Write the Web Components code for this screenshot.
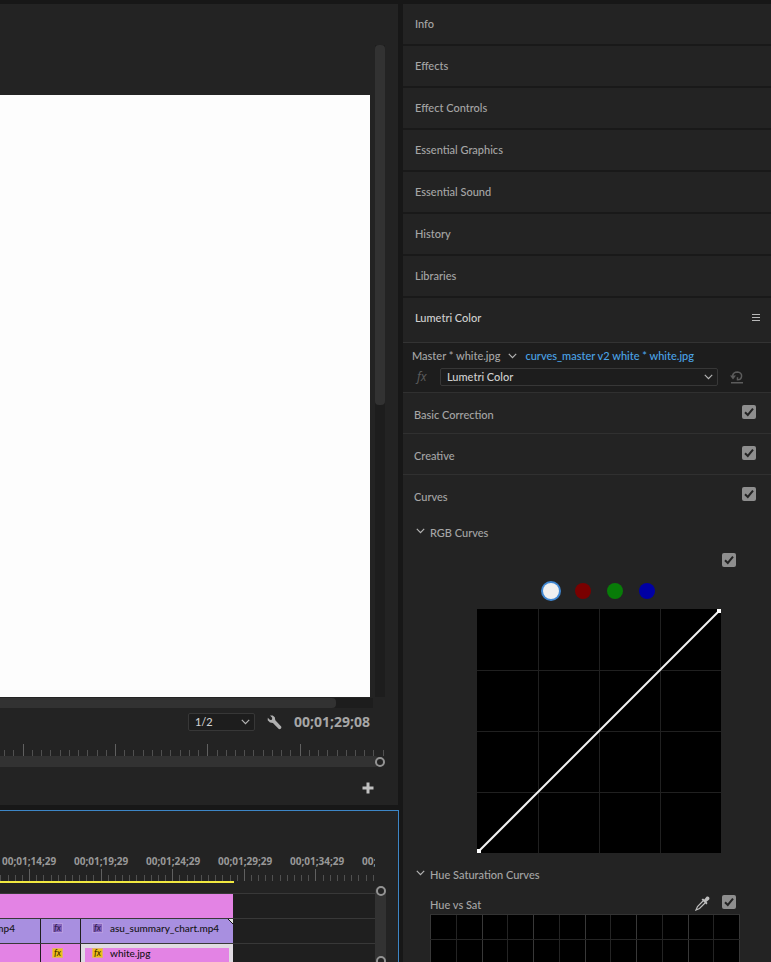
<!DOCTYPE html>
<html lang="en">
<head>
<meta charset="utf-8">
<title>Editing workspace</title>
<style>
    body {
        margin: 0;
        background: #171717;
        color: #a6a6a6;
        font: 500 11px/16px Lato, "Noto Sans", sans-serif;
    }
</style>
</head>
<body>

<edit-workspace>
    <program-monitor slot="monitor" timecode="00;01;29;08"></program-monitor>
    <time-line slot="timeline">
        <clip-track slot="tracks">
            <media-clip kind="pink" style="flex: 1"></media-clip>
        </clip-track>
        <clip-track slot="tracks">
            <media-clip kind="violet" style="width: 40px">mp4</media-clip>
            <media-clip kind="violet" fx style="width: 39px"></media-clip>
            <media-clip kind="violet" fx end style="flex: 1">asu_summary_chart.mp4</media-clip>
        </clip-track>
        <clip-track slot="tracks">
            <media-clip kind="pink" style="width: 40px"></media-clip>
            <media-clip kind="pink" fx style="width: 39px"></media-clip>
            <media-clip kind="pink" fx selected style="flex: 1">white.jpg</media-clip>
        </clip-track>
    </time-line>
    <panel-tab slot="panels">Info</panel-tab>
    <panel-tab slot="panels">Effects</panel-tab>
    <panel-tab slot="panels">Effect Controls</panel-tab>
    <panel-tab slot="panels">Essential Graphics</panel-tab>
    <panel-tab slot="panels">Essential Sound</panel-tab>
    <panel-tab slot="panels">History</panel-tab>
    <panel-tab slot="panels">Libraries</panel-tab>
    <lumetri-panel slot="panels"></lumetri-panel>
</edit-workspace>

<script>

// small helper, every element gets its shadow root from a template

function attach(element, html) {
    const template = document.createElement('template');
    template.innerHTML = html;
    element.attachShadow({mode: 'open'});
    element.shadowRoot.appendChild(template.content.cloneNode(true));
}

const chevron = `<svg class="chevron" width="9" height="6" viewBox="0 0 9 6" fill="none" stroke="#b4b4b4" stroke-width="1.2"><path d="M.8 .8 4.5 4.6 8.2 .8"/></svg>`;

// the page: monitor and timeline on the left, panels on the right

class EditWorkspace extends HTMLElement {

    constructor() {
        super();
        attach(this, `
            <style>
                :host {
                    display: grid;
                    grid-template-columns: minmax(0, 1fr) 368px;
                    gap: 4px;
                    height: 100vh;
                    overflow: hidden;
                }
                .left, .right { display: flex; flex-direction: column; min-height: 0; padding-top: 4px; }
            </style>
            <main class="left">
                <slot name="monitor"></slot>
                <slot name="timeline"></slot>
            </main>
            <aside class="right"><slot name="panels"></slot></aside>
        `);
    }
}

window.customElements.define('edit-workspace', EditWorkspace);

// tick marks, every tenth one is long

class TickRuler extends HTMLElement {

    connectedCallback() {
        const start = Number(this.getAttribute('start'));
        const step = Number(this.getAttribute('step'));
        const count = Number(this.getAttribute('count'));
        const major = Number(this.getAttribute('major'));
        let lines = '';

        for (let i = 0; i < count; i++) {
            const x = Math.floor(start + i * step);
            const long = i % 10 == major;
            lines += `<rect x="${x}" y="${long ? 0 : 6}" width="1" height="${long ? 12 : 6}" fill="${long ? '#606060' : '#505050'}"/>`;
        }

        attach(this, `
            <style>
                :host { display: block; height: 12px; overflow: hidden; }
                svg { display: block; }
            </style>
            <svg width="400" height="12">${lines}</svg>
        `);
    }
}

window.customElements.define('tick-ruler', TickRuler);

class ProgramMonitor extends HTMLElement {

    constructor() {
        super();
        attach(this, `
            <style>
                :host {
                    display: flex;
                    flex-direction: column;
                    flex: 1;
                    min-height: 0;
                    background: #232323;
                    margin-right: 1px;
                }
                .stage { display: flex; gap: 5px; flex: 1; min-height: 0; }
                .picture { flex: 1; background: #fdfdfd; margin-top: 91px; }
                .vertical { width: 10px; margin: 41px 13px 0 0; background: #1d1d1d; }
                .vertical div { height: 360px; background: #323232; border-radius: 4px; }
                .horizontal { height: 10px; margin: 1px 25px 0 0; background: #1d1d1d; }
                .horizontal div { width: 90%; height: 10px; background: #323232; border-radius: 0 4px 4px 0; }
                .controls {
                    display: flex;
                    justify-content: flex-end;
                    align-items: center;
                    height: 28px;
                    padding-right: 28px;
                    margin-bottom: 8px;
                }
                .pick { position: relative; display: flex; align-items: center; margin-right: 12px; }
                select {
                    appearance: none;
                    width: 67px;
                    height: 18px;
                    padding: 0 6px;
                    border: 1px solid #373737;
                    border-radius: 2px;
                    background: #1d1d1d;
                    color: #d0d0d0;
                    font: inherit;
                }
                .pick .chevron { position: absolute; right: 5px; pointer-events: none; }
                button { border: 0; padding: 0; background: none; }
                svg { display: block; }
                .time { margin-left: 12px; font: 700 14px/18px "Noto Sans", sans-serif; }
                .zoom { display: flex; justify-content: flex-end; align-items: center; height: 11px; margin-right: 18px; background: #323232; border-radius: 0 6px 6px 0; }
                .knob { width: 6px; height: 6px; margin-right: -5px; border: 2px solid #939393; border-radius: 50%; background: #232323; }
                .actions { display: flex; justify-content: flex-end; padding: 15px 24px 11px; }
            </style>
            <div class="stage">
                <div class="picture"></div>
                <div class="vertical"><div></div></div>
            </div>
            <div class="horizontal"><div></div></div>
            <div class="controls">
                <span class="pick">
                    <select aria-label="Playback resolution"><option>1/2</option></select>
                    ${chevron}
                </span>
                <button aria-label="Settings">
                    <svg width="15" height="15" viewBox="0 0 15 15"><path fill="#b0b0b0" d="M3 .5 5.700 .4 7.800 2.200 8.300 5.200 14.200 11.400C15 12.800 13.300 14.700 11.800 14L5.900 8 3 7.400 .7 5.200 .8 2.800 3.100 4.900 5 4.700 5.200 2.800Z"/></svg>
                </button>
                <span class="time"></span>
            </div>
            <tick-ruler start="-4.500" step="9.230" count="43" major="3"></tick-ruler>
            <div class="zoom"><div class="knob"></div></div>
            <div class="actions">
                <button aria-label="Button editor">
                    <svg width="12" height="12" viewBox="0 0 12 12"><path fill="#c0c0c0" d="M4.500 .5h3v4h4v3h-4v4h-3v-4h-4v-3h4z"/></svg>
                </button>
            </div>
        `);
        this.shadowRoot.querySelector('.time').textContent = this.getAttribute('timecode');
    }
}

window.customElements.define('program-monitor', ProgramMonitor);

class TimeLine extends HTMLElement {

    constructor() {
        super();
        attach(this, `
            <style>
                :host {
                    display: block;
                    flex: none;
                    height: 151px;
                    margin-top: 5px;
                    border: solid #3d86c6;
                    border-width: 1px 1px 0 0;
                    background: #232323;
                    overflow: hidden;
                }
                .labels {
                    display: grid;
                    grid-template-columns: repeat(6, 72px);
                    margin: 43px 23px 0 0;
                    padding-left: 2px;
                    overflow: hidden;
                    font: 700 10px/15px "Noto Sans", sans-serif;
                    color: #989898;
                }
                tick-ruler { margin-right: 23px; }
                .bar { width: 234px; height: 2px; margin-bottom: 3px; background: #f0e840; }
                .body { display: flex; }
                .tracks { flex: 1; min-width: 0; padding-top: 7px; }
                .scroll {
                    display: flex;
                    flex-direction: column;
                    justify-content: space-between;
                    align-items: center;
                    width: 11px;
                    height: 80px;
                    margin-right: 12px;
                    background: #323232;
                    border-radius: 6px;
                }
                .knob { width: 6px; height: 6px; border: 2px solid #939393; border-radius: 50%; background: #232323; }
            </style>
            <div class="labels">
                <span>00;01;14;29</span><span>00;01;19;29</span><span>00;01;24;29</span>
                <span>00;01;29;29</span><span>00;01;34;29</span><span>00;</span>
            </div>
            <tick-ruler start="0.900" step="7.160" count="53" major="4"></tick-ruler>
            <div class="bar"></div>
            <div class="body">
                <div class="tracks"><slot name="tracks"></slot></div>
                <div class="scroll"><div class="knob"></div><div class="knob"></div></div>
            </div>
        `);
    }
}

window.customElements.define('time-line', TimeLine);

class ClipTrack extends HTMLElement {

    constructor() {
        super();
        attach(this, `
            <style>
                :host { display: block; height: 24px; border-top: 1px solid #383838; background: #1f1f1f; }
                .clips { display: flex; gap: 1px; width: 233px; height: 24px; background: #1f1f1f; }
            </style>
            <div class="clips"><slot></slot></div>
        `);
    }
}

window.customElements.define('clip-track', ClipTrack);

class MediaClip extends HTMLElement {

    constructor() {
        super();
        attach(this, `
            <style>
                :host {
                    position: relative;
                    display: flex;
                    align-items: center;
                    gap: 7px;
                    box-sizing: border-box;
                    height: 24px;
                    overflow: hidden;
                    background: #e383e4;
                    color: #141414;
                    white-space: nowrap;
                    font-size: 10px;
                    line-height: 14px;
                    padding-bottom: 6px;
                }
                :host([kind="violet"]) { background: #a88fe0; }
                :host(:not([fx])) { justify-content: flex-end; padding-right: 25px; }
                :host([fx]) { padding-left: 11px; }
                :host([selected]) { border: 4px solid #e0dbe2; border-bottom: 0; padding: 0 0 10px 7px; }
                i {
                    box-sizing: border-box;
                    width: 11px;
                    height: 10px;
                    border: 1px solid #b69ce0;
                    background: #8663bb;
                    color: #302050;
                    font-size: 9px;
                    line-height: 7px;
                    text-align: center;
                }
                :host([kind="pink"]) i { background: #efbd18; border-color: #e0b070; color: #403000; }
                .corner { position: absolute; top: 0; right: 0; }
            </style>
            ${this.hasAttribute('fx') ? '<i>fx</i>' : ''}
            <slot></slot>
            ${this.hasAttribute('end') ? '<svg class="corner" width="5" height="5"><path d="M0 0h5v5z" fill="#e4e4e4"/><path d="M0 0 5 5" stroke="#111"/></svg>' : ''}
        `);
    }
}

window.customElements.define('media-clip', MediaClip);

// collapsed panel in the right column

class PanelTab extends HTMLElement {

    constructor() {
        super();
        attach(this, `
            <style>
                :host {
                    display: flex;
                    align-items: center;
                    flex: none;
                    height: 40px;
                    padding: 0 12px;
                    border-bottom: 2px solid #191919;
                    background: #232323;
                }
            </style>
            <slot></slot>
        `);
    }
}

window.customElements.define('panel-tab', PanelTab);

class CheckBox extends HTMLElement {

    constructor() {
        super();
        attach(this, `
            <style>
                :host { display: block; width: 14px; height: 14px; }
                input {
                    display: block;
                    appearance: none;
                    width: 14px;
                    height: 14px;
                    margin: 0;
                    border-radius: 2px;
                    background: #8e8e8e;
                }
                label { position: relative; display: block; }
                svg { position: absolute; left: 0; top: 0; visibility: hidden; pointer-events: none; }
                input:checked + svg { visibility: visible; }
            </style>
            <label>
                <input type="checkbox" checked>
                <svg width="14" height="14" fill="none" stroke="#232323" stroke-width="2"><path d="M3 7.200 5.800 10 11 3.600"/></svg>
            </label>
        `);
        this.shadowRoot.querySelector('input').setAttribute('aria-label', this.getAttribute('name'));
    }
}

window.customElements.define('check-box', CheckBox);

class ColorSection extends HTMLElement {

    constructor() {
        super();
        attach(this, `
            <style>
                :host { display: block; flex: none; height: 40px; border-top: 1px solid #303030; }
                div { display: flex; justify-content: space-between; padding: 12px 15px 0 11px; line-height: 20px; }
            </style>
            <div><slot></slot><check-box name="${this.textContent}"></check-box></div>
        `);
    }
}

window.customElements.define('color-section', ColorSection);

// RGB curve with its four by four grid

class CurveGraph extends HTMLElement {

    constructor() {
        super();
        attach(this, `
            <style>
                :host { display: block; width: 244px; height: 244px; }
                svg { display: block; background: #000; }
            </style>
            <svg width="244" height="244">
                <path d="M61.500 0v244M122.500 0v244M183.500 0v244M0 61.500h244M0 122.500h244M0 183.500h244" stroke="#202020"/>
                <path d="M2 242 242 2" stroke="#f2f2f2" stroke-width="2"/>
                <path d="M0 240h4v4h-4zM240 0h4v4h-4z" fill="#fff"/>
            </svg>
        `);
    }
}

window.customElements.define('curve-graph', CurveGraph);

class HueGraph extends HTMLElement {

    constructor() {
        super();
        let lines = '';

        for (let i = 0; i <= 12; i++) {
            const x = Math.round(i * 25.75) + 0.5;
            lines += `<path d="M${x} 0v120" stroke="${i % 2 ? '#242424' : '#383838'}"/>`;
        }

        attach(this, `
            <style>
                :host { display: block; overflow: hidden; }
                svg { display: block; background: #000; }
            </style>
            <svg width="310" height="120">
                ${lines}
                <path d="M0 .5h310" stroke="#333"/>
                <path d="M0 25.500h310M0 50.500h310" stroke="#242424"/>
            </svg>
        `);
    }
}

window.customElements.define('hue-graph', HueGraph);

class LumetriPanel extends HTMLElement {

    constructor() {
        super();
        attach(this, `
            <style>
                :host {
                    display: flex;
                    flex-direction: column;
                    flex: 1;
                    min-height: 0;
                    overflow: hidden;
                    background: #232323;
                }
                :host > * { flex: none; }
                button { border: 0; padding: 0; background: none; }
                svg { display: block; }
                header {
                    display: flex;
                    justify-content: space-between;
                    align-items: center;
                    height: 40px;
                    padding: 0 11px 4px 12px;
                    border-bottom: 1px solid #333;
                    color: #d0d0d0;
                }
                .source { height: 49px; background: #1d1d1d; }
                .names { display: flex; align-items: center; gap: 8px; height: 16px; padding: 5px 9px 4px; }
                a { color: #4ba3e8; text-decoration: none; }
                .effect { display: flex; align-items: center; gap: 12px; padding-left: 14px; }
                .effect i { width: 11px; color: #5a5a5a; font: italic 12px/16px "Noto Sans", sans-serif; }
                .pick { position: relative; display: flex; align-items: center; }
                select {
                    appearance: none;
                    width: 278px;
                    height: 18px;
                    padding: 0 6px;
                    border: 1px solid #373737;
                    border-radius: 2px;
                    background: #1d1d1d;
                    color: #d0d0d0;
                    font: inherit;
                }
                .pick .chevron { position: absolute; right: 5px; pointer-events: none; }
                .group { display: flex; align-items: flex-start; gap: 5px; margin-top: 10px; padding-left: 13px; color: #a6a6a6; font: inherit; }
                .group .chevron { margin-top: 3px; }
                .enable { display: flex; justify-content: flex-end; padding: 12px 35px 0 0; }
                .channels { display: flex; justify-content: center; align-items: center; gap: 16px; height: 20px; margin: 14px 0 8px 24px; }
                .channels input { appearance: none; width: 16px; height: 16px; margin: 0; border-radius: 50%; background: var(--channel); }
                .channels input:checked { box-shadow: 0 0 0 2px #3f87d2; }
                curve-graph { margin: 0 0 4px 74px; }
                .hue { display: flex; gap: 12px; height: 16px; line-height: 20px; padding: 12px 35px 3px 27px; }
                .hue span { flex: 1; }
                hue-graph { margin: 0 31px 0 27px; }
            </style>
            <header>
                <span>Lumetri Color</span>
                <button aria-label="Panel menu">
                    <svg width="8" height="8"><path d="M0 .5h8M0 3.500h8M0 6.500h8" stroke="#b8b8b8"/></svg>
                </button>
            </header>
            <div class="source">
                <div class="names"><span>Master * white.jpg</span>${chevron}<a href="#">curves_master v2 white * white.jpg</a></div>
                <div class="effect">
                    <i>fx</i>
                    <span class="pick">
                        <select aria-label="Effect"><option>Lumetri Color</option></select>
                        ${chevron}
                    </span>
                    <button aria-label="Reset effect">
                        <svg width="13" height="13" fill="none" stroke="#5c5c5c" stroke-width="1.5"><path d="M2.500 5C3 2.300 5 1 7.500 1 10 1.200 11.800 3 11.600 5 11.500 7.500 9.500 8.800 7.500 8.800V6.200M1 11.800h12"/><path d="M0 4.500h6L3 8.500z" fill="#5c5c5c" stroke="none"/></svg>
                    </button>
                </div>
            </div>
            <color-section>Basic Correction</color-section>
            <color-section>Creative</color-section>
            <color-section>Curves</color-section>
            <button class="group">${chevron}RGB Curves</button>
            <div class="enable"><check-box name="RGB Curves"></check-box></div>
            <div class="channels">
                <input type="radio" name="channel" aria-label="Luma" checked style="--channel: #f0f0f0">
                <input type="radio" name="channel" aria-label="Red" style="--channel: #790000">
                <input type="radio" name="channel" aria-label="Green" style="--channel: #087c08">
                <input type="radio" name="channel" aria-label="Blue" style="--channel: #0000a4">
            </div>
            <curve-graph></curve-graph>
            <button class="group">${chevron}Hue Saturation Curves</button>
            <div class="hue">
                <span>Hue vs Sat</span>
                <button aria-label="Pick hue">
                    <svg width="15" height="15" viewBox="0 0 15 15"><path d="M8.500 4.500 2.500 10.500 1 14 4.500 12.500 10.500 6.500" fill="none" stroke="#bdbdbd" stroke-width="1.200"/><path d="M6.500 3.500 8 2.500 9.300 3.500 11.500 .8C13.300 -.3 15.200 1.500 14.200 3.400L11.500 5.700 12.500 7 11.500 8.500Z" fill="#bdbdbd"/></svg>
                </button>
                <check-box name="Hue vs Sat"></check-box>
            </div>
            <hue-graph></hue-graph>
        `);
    }
}

window.customElements.define('lumetri-panel', LumetriPanel);

</script>
</body>
</html>
